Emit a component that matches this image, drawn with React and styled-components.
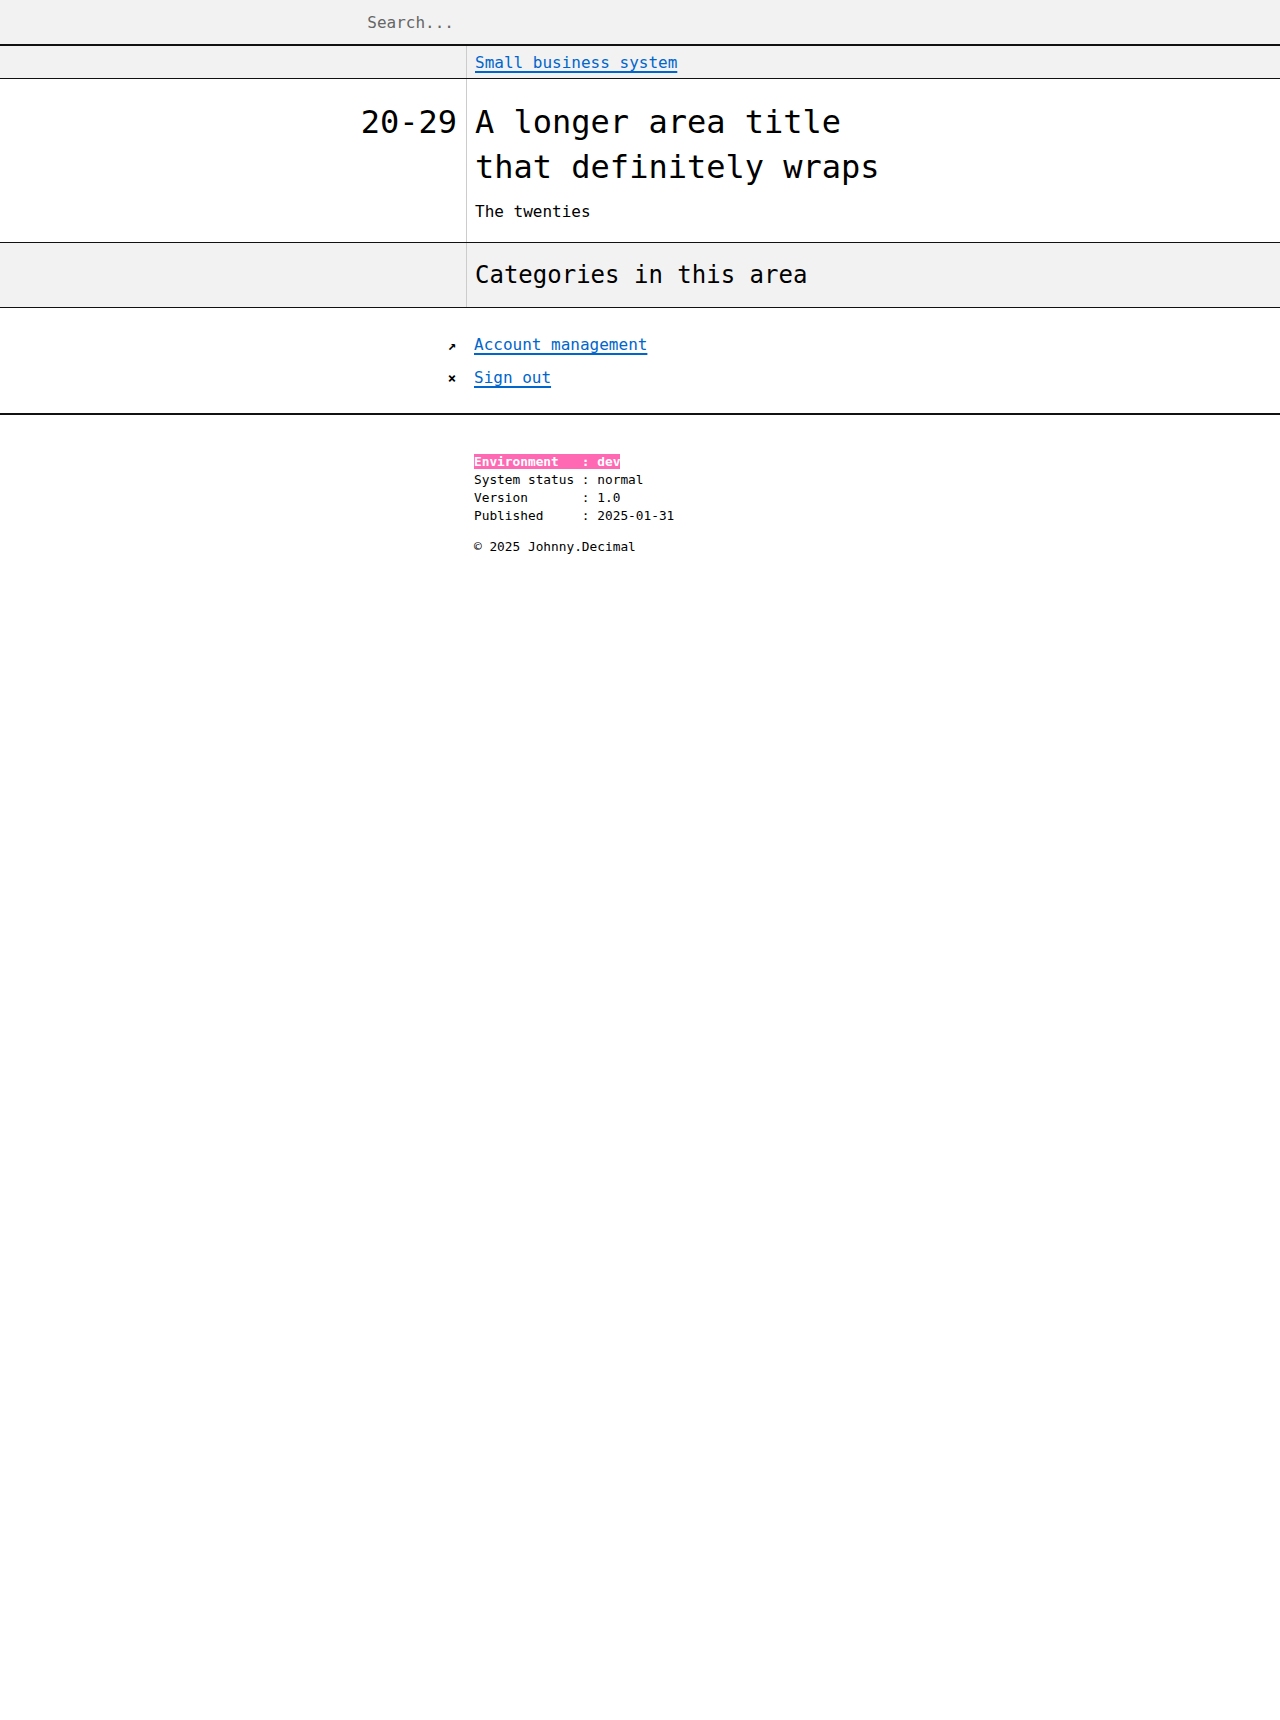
import React from "react";
import styled, { createGlobalStyle } from "styled-components";

const GlobalStyle = createGlobalStyle`
  body {
    margin: 0;
    background: #ffffff;
    color: #000000;
    font-family: "DejaVu Sans Mono", "Liberation Mono", monospace;
  }
`;

const Page = styled.div`
  display: flex;
  flex-direction: column;
`;

const Row = styled.div`
  display: grid;
  grid-template-columns: 466px 1fr;
  background: ${props => (props.grey ? "#f2f2f2" : "#ffffff")};
  border-bottom: ${props => props.rule || "none"};
`;

const Side = styled.div`
  display: flex;
  justify-content: flex-end;
  align-items: ${props => props.align || "flex-start"};
  padding-right: 9px;
`;

const Main = styled.div`
  display: flex;
  flex-direction: column;
  justify-content: center;
  padding-left: 8px;
  border-left: ${props => (props.divider ? "1px solid #cccccc" : "none")};
`;

const SearchInput = styled.input`
  width: 100%;
  height: 44px;
  border: none;
  background: transparent;
  font-family: inherit;
  font-size: 16px;
  color: #000;
  text-align: right;
  padding: 0 3px 0 0;
  outline: none;

  &::placeholder {
    color: #666666;
  }
`;

const CrumbBar = styled.div`
  padding-top: 2px;
`;

const Crumb = styled.a`
  font-size: 16px;
  line-height: 30px;
  color: #0066cc;
  text-decoration: underline;
  text-decoration-thickness: 2px;
  text-underline-offset: 3px;
`;

const AreaNumber = styled.div`
  font-size: 32px;
  line-height: 45px;
  padding-top: 21px;
`;

const TitleBlock = styled.div`
  display: flex;
  flex-direction: column;
  gap: 10px;
  padding: 21px 0 18px;
`;

const AreaTitle = styled.h1`
  margin: 0;
  font-size: 32px;
  font-weight: normal;
  line-height: 45px;
`;

const AreaSub = styled.p`
  margin: 0;
  font-size: 16px;
  line-height: 24px;
`;

const SectionTitle = styled.h2`
  margin: 0;
  font-size: 24px;
  font-weight: normal;
  line-height: 64px;
`;

const LinkList = styled.div`
  display: flex;
  flex-direction: column;
  gap: 9px;
  padding: 25px 0 23px;
  border-bottom: 2px solid #111111;
`;

const Icon = styled.span`
  font-size: 14px;
  font-weight: bold;
  line-height: 24px;
  width: 10px;
  text-align: center;
`;

const NavLink = styled.a`
  font-size: 16px;
  line-height: 24px;
  color: #0066cc;
  text-decoration: underline;
  text-decoration-thickness: 2px;
  text-underline-offset: 3px;
`;

const LinkCell = styled.div`
  padding-left: 8px;
`;

const Footer = styled.div`
  padding: 38px 0 0 8px;
  font-size: 12.8px;
  line-height: 18px;
`;

const StatusLine = styled.div`
  white-space: pre;
  span {
    background: ${props => (props.highlight ? "#ff69b4" : "transparent")};
    color: ${props => (props.highlight ? "#ffffff" : "#000000")};
    font-weight: ${props => (props.highlight ? "bold" : "normal")};
  }
`;

const Copyright = styled.div`
  margin-top: 13px;
`;

const status = [
  { label: "Environment  ", value: "dev", highlight: true },
  { label: "System status", value: "normal" },
  { label: "Version      ", value: "1.0" },
  { label: "Published    ", value: "2025-01-31" }
];

const links = [
  { icon: "↗", text: "Account management" },
  { icon: "×", text: "Sign out" }
];

export default function App() {
  return (
    <Page>
      <GlobalStyle />
      <Row grey rule="2px solid #111111">
        <Side align="center">
          <SearchInput placeholder="Search..." />
        </Side>
        <div />
      </Row>
      <Row grey rule="1px solid #111111">
        <Side />
        <Main divider>
          <CrumbBar>
            <Crumb href="#">Small business system</Crumb>
          </CrumbBar>
        </Main>
      </Row>
      <Row rule="1px solid #111111">
        <Side>
          <AreaNumber>20-29</AreaNumber>
        </Side>
        <Main divider>
          <TitleBlock>
            <AreaTitle>
              A longer area title
              <br />
              that definitely wraps
            </AreaTitle>
            <AreaSub>The twenties</AreaSub>
          </TitleBlock>
        </Main>
      </Row>
      <Row grey rule="1px solid #111111">
        <Side />
        <Main divider>
          <SectionTitle>Categories in this area</SectionTitle>
        </Main>
      </Row>
      <LinkList>
        {links.map(link => (
          <Row key={link.text}>
            <Side>
              <Icon>{link.icon}</Icon>
            </Side>
            <LinkCell>
              <NavLink href="#">{link.text}</NavLink>
            </LinkCell>
          </Row>
        ))}
      </LinkList>
      <Row>
        <Side />
        <Footer>
          {status.map(item => (
            <StatusLine key={item.label} highlight={item.highlight}>
              <span>{`${item.label} : ${item.value}`}</span>
            </StatusLine>
          ))}
          <Copyright>© 2025 Johnny.Decimal</Copyright>
        </Footer>
      </Row>
    </Page>
  );
}
